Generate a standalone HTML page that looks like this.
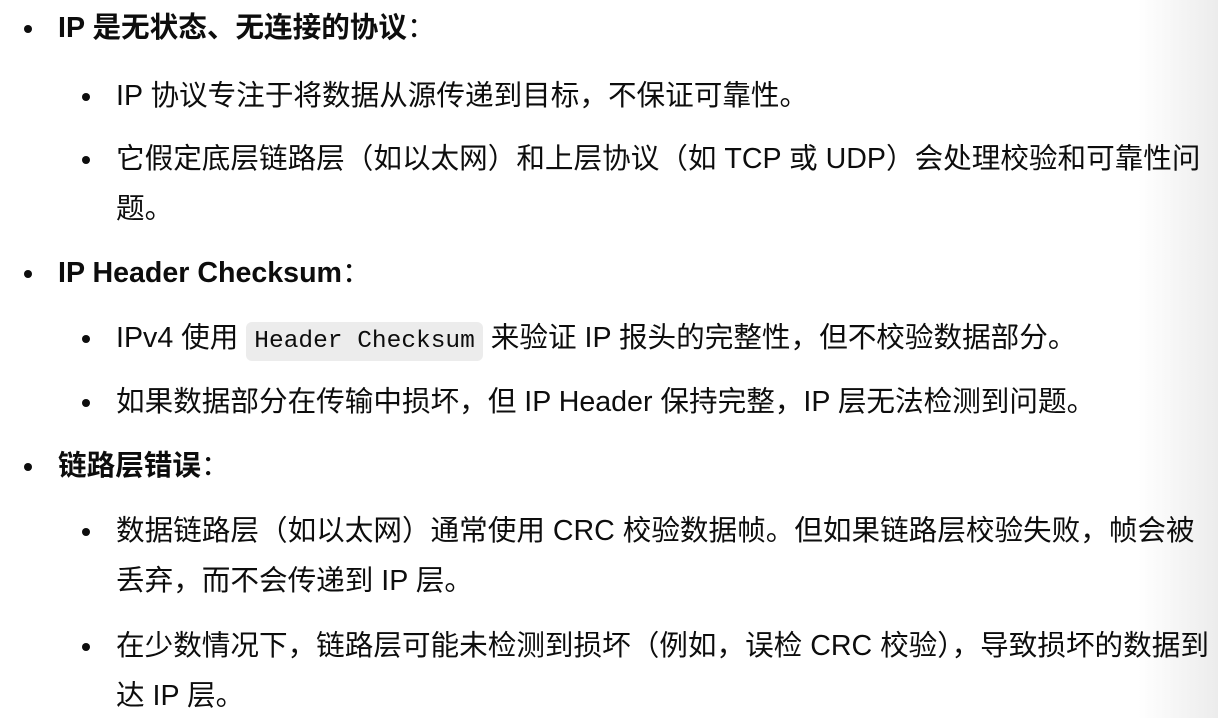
<!DOCTYPE html>
<html><head><meta charset="utf-8"><style>
html,body{margin:0;padding:0;width:1218px;height:718px;overflow:hidden;background:#fff}
body{position:relative;font-family:"Liberation Sans","Noto Sans CJK SC",sans-serif;font-size:28.6px;color:#0d0d0d}
.shade{position:absolute;right:0;top:0;width:80px;height:718px;background:linear-gradient(to right,rgba(235,235,235,0),#ececec)}
.l{position:absolute;white-space:nowrap;height:50px;line-height:50px}
.d1,.d2{position:absolute;width:8px;height:8px;border-radius:50%;background:#0d0d0d}
b{font-weight:bold}
code{font-family:"Liberation Mono","DejaVu Sans Mono",monospace;font-size:24.5px;background:#ececec;border-radius:6px;padding:6px 8px}
</style></head><body>
<div class="shade"></div>

<div class="d1" style="left:24px;top:25px"></div>
<div class="l" style="left:58px;top:3px"><b>IP 是无状态、无连接的协议</b>：</div>

<div class="d2" style="left:82px;top:93px"></div>
<div class="l" style="left:116px;top:71px">IP 协议专注于将数据从源传递到目标，不保证可靠性。</div>

<div class="d2" style="left:82px;top:156px"></div>
<div class="l" style="left:116px;top:134px">它假定底层链路层（如以太网）和上层协议（如 TCP 或 UDP）会处理校验和可靠性问</div>
<div class="l" style="left:116px;top:184px">题。</div>

<div class="d1" style="left:24px;top:270px"></div>
<div class="l" style="left:58px;top:248px"><b>IP Header Checksum</b>：</div>

<div class="d2" style="left:82px;top:335px"></div>
<div class="l" style="left:116px;top:313px">IPv4 使用 <code>Header Checksum</code> 来验证 IP 报头的完整性，但不校验数据部分。</div>

<div class="d2" style="left:82px;top:399px"></div>
<div class="l" style="left:116px;top:377px">如果数据部分在传输中损坏，但 IP Header 保持完整，IP 层无法检测到问题。</div>

<div class="d1" style="left:24px;top:463px"></div>
<div class="l" style="left:58px;top:441px"><b>链路层错误</b>：</div>

<div class="d2" style="left:82px;top:528px"></div>
<div class="l" style="left:116px;top:506px">数据链路层（如以太网）通常使用 CRC 校验数据帧。但如果链路层校验失败，帧会被</div>
<div class="l" style="left:116px;top:556px">丢弃，而不会传递到 IP 层。</div>

<div class="d2" style="left:82px;top:643px"></div>
<div class="l" style="left:116px;top:621px">在少数情况下，链路层可能未检测到损坏（例如，误检 CRC 校验），导致损坏的数据到</div>
<div class="l" style="left:116px;top:671px">达 IP 层。</div>
</body></html>
